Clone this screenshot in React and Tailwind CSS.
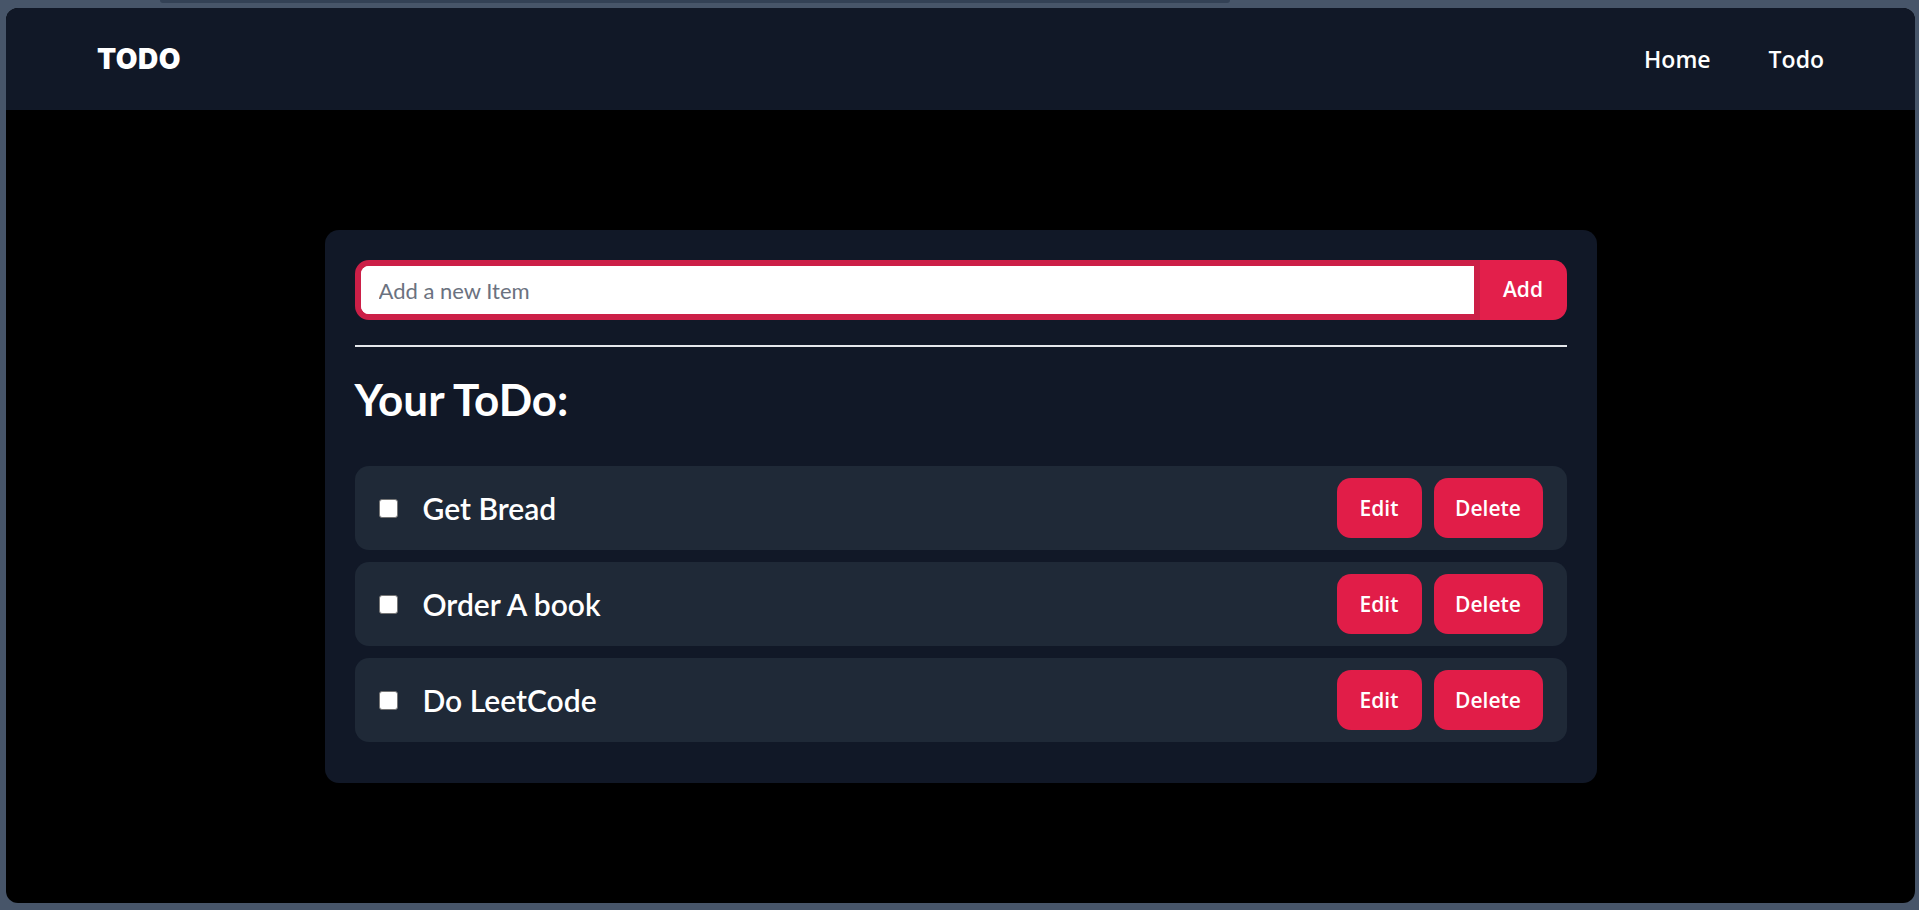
import React from "react";

const items = ["Get Bread", "Order A book", "Do LeetCode"];

export default function App() {
  return (
    <div className="relative h-screen w-full bg-[#475569] pt-[8px] pl-[6px] pr-[4px] pb-[7px] overflow-hidden">
      <div className="absolute top-0 left-[160px] w-[1070px] h-[3px] rounded-b-[6px] bg-[#334155]" />
      <div className="h-full w-full rounded-[12px] overflow-hidden bg-black flex flex-col">
        <nav className="h-[102px] shrink-0 bg-[#111827] flex items-center justify-between pl-[91px] pr-[91px]">
          <div className="text-white text-[28px] font-black tracking-[0.5px]" style={{ fontFamily: "Inter, 'Liberation Sans', sans-serif" }}>
            TODO
          </div>
          <ul className="flex items-center gap-[58px] text-white text-[23px] font-semibold" style={{ fontFamily: "'Open Sans', 'Noto Sans', sans-serif" }}>
            <li>Home</li>
            <li>Todo</li>
          </ul>
        </nav>
        <main className="flex-1 flex justify-center" style={{ fontFamily: "Lato, 'Noto Sans', sans-serif" }}>
          <div className="mt-[120px] w-[1272px] self-start bg-[#111827] rounded-[14px] pt-[30px] px-[30px] pb-[41px]">
            <div className="flex h-[60px]">
              <div className="flex-1 border-[6px] border-[#cc1f47] rounded-l-[14px] bg-white flex items-center">
                <input
                  className="w-full h-full pl-[18px] text-[22px] text-gray-700 placeholder:text-[#6b7280] outline-none bg-white rounded-l-[8px]"
                  placeholder="Add a new Item"
                />
              </div>
              <button
                className="w-[87px] h-full bg-[#e31f4b] text-white text-[21px] font-semibold rounded-r-[14px]"
                style={{ fontFamily: "'Open Sans', 'Noto Sans', sans-serif" }}
              >
                Add
              </button>
            </div>
            <div className="mt-[25px] h-[2px] bg-[#e5e7eb]" />
            <h2 className="mt-[30px] text-white text-[44px] font-bold leading-none">Your ToDo:</h2>
            <div className="mt-[45px] flex flex-col gap-[12px]">
              {items.map((t) => (
                <div key={t} className="h-[84px] bg-[#1f2937] rounded-[14px] flex items-center justify-between pl-[24px] pr-[24px]">
                  <div className="flex items-center gap-[25px]">
                    <input
                      type="checkbox"
                      className="appearance-none w-[19px] h-[19px] m-0 bg-white border border-[#767676] rounded-[3px]"
                    />
                    <span className="text-white text-[30px] font-semibold">{t}</span>
                  </div>
                  <div className="flex items-center gap-[12px]" style={{ fontFamily: "'Open Sans', 'Noto Sans', sans-serif" }}>
                    <button className="w-[85px] h-[60px] rounded-[14px] bg-[#e11d48] text-white text-[21px] font-semibold pt-[2px]">Edit</button>
                    <button className="w-[109px] h-[60px] rounded-[14px] bg-[#e11d48] text-white text-[21px] font-semibold pt-[2px]">Delete</button>
                  </div>
                </div>
              ))}
            </div>
          </div>
        </main>
      </div>
    </div>
  );
}
